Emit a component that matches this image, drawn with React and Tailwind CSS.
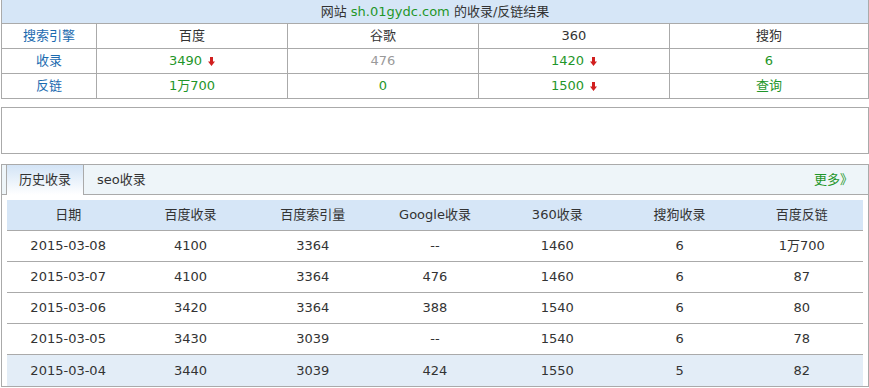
import React from "react";

const top = [
  { name: "收录", cells: [{ v: "3490", down: true }, { v: "476", gray: true }, { v: "1420", down: true }, { v: "6" }] },
  { name: "反链", cells: [{ v: "1万700" }, { v: "0" }, { v: "1500", down: true }, { v: "查询" }] },
];

const history = [
  ["2015-03-08", "4100", "3364", "--", "1460", "6", "1万700"],
  ["2015-03-07", "4100", "3364", "476", "1460", "6", "87"],
  ["2015-03-06", "3420", "3364", "388", "1540", "6", "80"],
  ["2015-03-05", "3430", "3039", "--", "1540", "6", "78"],
  ["2015-03-04", "3440", "3039", "424", "1550", "5", "82"],
];

function DownArrow() {
  return (
    <svg width="7" height="9" viewBox="0 0 7 9" className="ml-[6px] shrink-0">
      <path d="M2 0h3v4.5h2L3.5 9 0 4.5h2z" fill="#d11f1f" />
    </svg>
  );
}

export default function App() {
  const cols = "grid grid-cols-[94px_191px_191px_191px_1fr]";
  return (
    <div className="w-[869px] bg-white text-[13px] text-[#333] font-['DejaVu_Sans','Noto_Sans_CJK_SC',sans-serif]">
      {/* 概况表 */}
      <div className="ml-px w-[868px] border-x border-b border-[#aaa]">
        <div className="h-[23px] bg-[#d6e6f7] text-center leading-[23px]">
          网站 <span className="text-[#1f962a]">sh.01gydc.com</span> 的收录/反链结果
        </div>
        <div className={`${cols} h-[25px] border-t border-[#aaa]`}>
          <div className="flex items-center justify-center text-[#1c6bb0]">搜索引擎</div>
          {["百度", "谷歌", "360", "搜狗"].map((t) => (
            <div key={t} className="flex items-center justify-center border-l border-[#aaa]">
              {t}
            </div>
          ))}
        </div>
        {top.map((row) => (
          <div key={row.name} className={`${cols} h-[25px] border-t border-[#aaa]`}>
            <div className="flex items-center justify-center text-[#1c6bb0]">{row.name}</div>
            {row.cells.map((c, i) => (
              <div
                key={i}
                className={`flex items-center justify-center border-l border-[#aaa] ${
                  c.gray ? "text-[#9a9a9a]" : "text-[#1f962a]"
                }`}
              >
                {c.v}
                {c.down ? <DownArrow /> : null}
              </div>
            ))}
          </div>
        ))}
      </div>

      {/* 空白框 */}
      <div className="ml-px mt-[8px] h-[47px] w-[868px] border border-[#aaa]" />

      {/* 历史收录 */}
      <div className="ml-px mt-[10px] w-[868px] border border-[#aaa] px-[5px]">
        <div className="-mx-[5px] flex h-[30px] items-stretch border-b border-[#aaa] bg-[#eef5f9] pl-[4px]">
          <div className="relative -mb-px flex w-[78px] items-center justify-center border-x border-[#aaa] bg-gradient-to-b from-[#d3e4f6] to-white">
            历史收录
          </div>
          <div className="flex items-center px-[13px]">seo收录</div>
          <div className="ml-auto flex items-center pr-[15px] text-[#1f962a]">更多》</div>
        </div>
        <div className="mt-[5px]">
          <div className="grid h-[31px] grid-cols-7 border-b border-[#aaa] bg-[#d6e6f7]">
            {["日期", "百度收录", "百度索引量", "Google收录", "360收录", "搜狗收录", "百度反链"].map((h) => (
              <div key={h} className="flex items-center justify-center">
                {h}
              </div>
            ))}
          </div>
          {history.map((r, i) => (
            <div
              key={r[0]}
              className={`grid h-[31px] grid-cols-7 ${
                i === history.length - 1 ? "bg-[#e3edf7]" : "border-b border-[#aaa]"
              }`}
            >
              {r.map((v, j) => (
                <div key={j} className="flex items-center justify-center">
                  {v}
                </div>
              ))}
            </div>
          ))}
        </div>
      </div>
    </div>
  );
}
